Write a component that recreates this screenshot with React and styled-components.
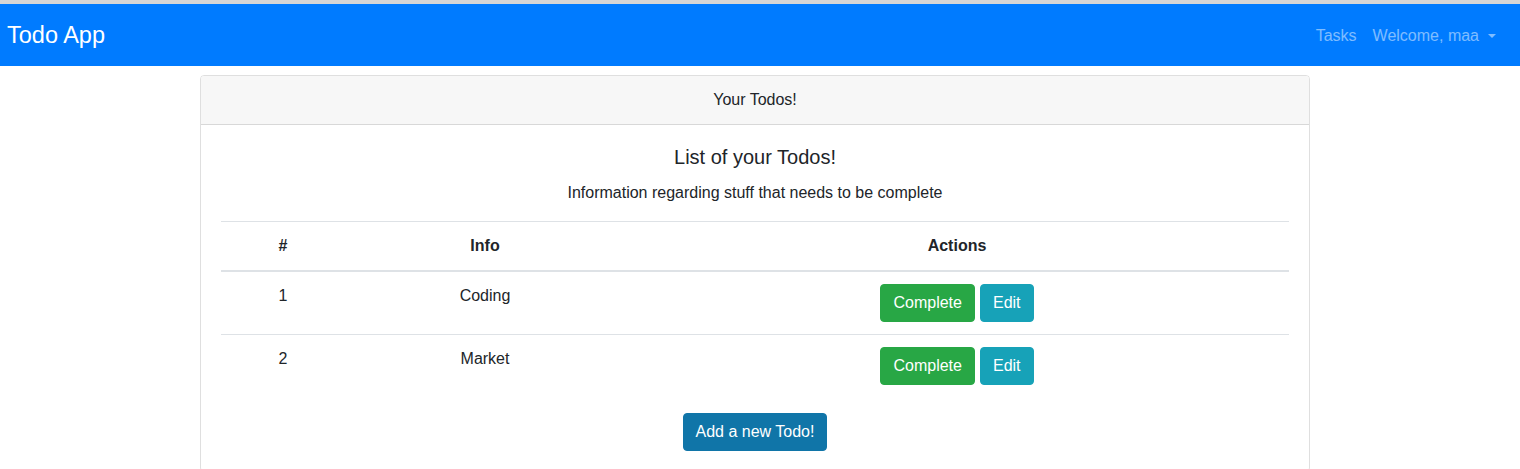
import React from 'react';
import styled, { createGlobalStyle } from 'styled-components';

/* ---------------------------------- style --------------------------------- */
const GlobalStyle = createGlobalStyle`
  * { box-sizing: border-box; }
  body {
    margin: 0;
    font-family: "Liberation Sans", Arial, sans-serif;
    font-size: 16px;
    line-height: 1.5;
    color: #212529;
    background: #fff;
    border-top: 4px solid #d6d6d6;
  }
`;

const NavBar = styled.nav`
  display: flex;
  align-items: center;
  justify-content: space-between;
  height: 62px;
  padding: 1px 24px 0 7px;
  background-color: #007bff;
`;
const Brand = styled.span`
  font-size: 23.5px;
  color: #fff;
`;
const NavLinks = styled.div`
  display: flex;
  align-items: center;
  gap: 16px;
`;
const NavLink = styled.span`
  color: rgba(255, 255, 255, 0.5);
  font-size: 16px;
  display: flex;
  align-items: center;
  &::after {
    content: ${(p) => (p.$dropdown ? "''" : 'none')};
    display: inline-block;
    margin-left: 9px;
    border-top: 4.8px solid;
    border-right: 4.8px solid transparent;
    border-left: 4.8px solid transparent;
  }
`;

const Card = styled.div`
  width: 1110px;
  margin: 9px 0 0 200px;
  border: 1px solid rgba(0, 0, 0, 0.125);
  border-radius: 4px;
  overflow: hidden;
`;
const CardHeader = styled.div`
  padding: 12px 20px;
  background-color: #f7f7f7;
  border-bottom: 1px solid rgba(0, 0, 0, 0.125);
  text-align: center;
`;
const CardBody = styled.div`
  padding: 20px;
  text-align: center;
`;
const CardTitle = styled.h5`
  margin: 0 0 12px;
  font-size: 20px;
  font-weight: 500;
  line-height: 1.2;
`;
const CardText = styled.p`
  margin: 0 0 16px;
`;

const Table = styled.table`
  width: 100%;
  border-collapse: collapse;
  margin-bottom: 16px;
  & th,
  & td {
    padding: 12px;
    vertical-align: top;
    border-top: 1px solid #dee2e6;
    text-align: center;
  }
  & thead th {
    border-bottom: 2px solid #dee2e6;
    font-weight: 700;
  }
`;

const Button = styled.button`
  display: inline-block;
  padding: 6px 12px;
  font-family: inherit;
  font-size: 16px;
  line-height: 1.5;
  color: #fff;
  background-color: ${(p) => p.$bg};
  border: 1px solid ${(p) => p.$bg};
  border-radius: 4px;
  cursor: pointer;
  & + & {
    margin-left: 5px;
  }
`;

/* -------------------------------- component ------------------------------- */
const todos = [
  { id: 1, info: 'Coding' },
  { id: 2, info: 'Market' },
];

const App = () => {
  return (
    <>
      <GlobalStyle />
      <NavBar>
        <Brand>Todo App</Brand>
        <NavLinks>
          <NavLink>Tasks</NavLink>
          <NavLink $dropdown>Welcome, maa</NavLink>
        </NavLinks>
      </NavBar>

      <Card>
        <CardHeader>Your Todos!</CardHeader>
        <CardBody>
          <CardTitle>List of your Todos!</CardTitle>
          <CardText>Information regarding stuff that needs to be complete</CardText>
          <Table>
            <colgroup>
              <col style={{ width: 124 }} />
              <col style={{ width: 280 }} />
              <col />
            </colgroup>
            <thead>
              <tr>
                <th>#</th>
                <th>Info</th>
                <th>Actions</th>
              </tr>
            </thead>
            <tbody>
              {todos.map((todo) => (
                <tr key={todo.id}>
                  <td>{todo.id}</td>
                  <td>{todo.info}</td>
                  <td>
                    <Button $bg="#28a745">Complete</Button>
                    <Button $bg="#17a2b8">Edit</Button>
                  </td>
                </tr>
              ))}
            </tbody>
          </Table>
          <Button $bg="#1075a8">Add a new Todo!</Button>
        </CardBody>
      </Card>
    </>
  );
};

export default App;
